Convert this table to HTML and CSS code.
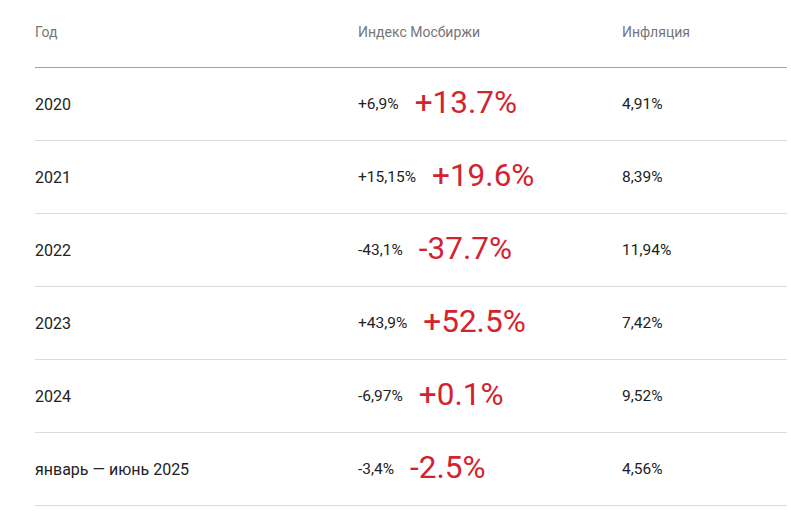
FILE: index.html
```html
<!DOCTYPE html>
<html lang="ru">
<head>
<meta charset="utf-8">
<title>Индекс Мосбиржи и инфляция</title>
<link rel="stylesheet" href="styles.css">
</head>
<body>
<div class="table">
  <div class="row head">
    <div class="cell">Год</div>
    <div class="cell">Индекс Мосбиржи</div>
    <div class="cell">Инфляция</div>
  </div>
  <div class="row">
    <div class="cell year">2020</div>
    <div class="cell"><span class="small">+6,9%</span><span class="big">+13.7%</span></div>
    <div class="cell">4,91%</div>
  </div>
  <div class="row">
    <div class="cell year">2021</div>
    <div class="cell"><span class="small">+15,15%</span><span class="big">+19.6%</span></div>
    <div class="cell">8,39%</div>
  </div>
  <div class="row">
    <div class="cell year">2022</div>
    <div class="cell"><span class="small">-43,1%</span><span class="big">-37.7%</span></div>
    <div class="cell">11,94%</div>
  </div>
  <div class="row">
    <div class="cell year">2023</div>
    <div class="cell"><span class="small">+43,9%</span><span class="big">+52.5%</span></div>
    <div class="cell">7,42%</div>
  </div>
  <div class="row">
    <div class="cell year">2024</div>
    <div class="cell"><span class="small">-6,97%</span><span class="big">+0.1%</span></div>
    <div class="cell">9,52%</div>
  </div>
  <div class="row">
    <div class="cell year">январь — июнь 2025</div>
    <div class="cell"><span class="small">-3,4%</span><span class="big">-2.5%</span></div>
    <div class="cell">4,56%</div>
  </div>
</div>
</body>
</html>
```

FILE: styles.css
```css
html, body {
  margin: 0;
  padding: 0;
  background: #fff;
}
body {
  font-family: Roboto, "Noto Sans", sans-serif;
  color: #222;
}
.table {
  margin-left: 35px;
  width: 752px;
}
.row {
  display: grid;
  grid-template-columns: 323px 264px 1fr;
  height: 72px;
  border-bottom: 1px solid #dcdcdc;
  font-size: 15.5px;
}
.row.head {
  height: 64px;
  padding-bottom: 3px;
  border-bottom: 1px solid #a3a3a3;
  color: #767676;
  font-size: 14px;
}
.cell {
  display: flex;
  align-items: center;
  white-space: nowrap;
}
.year {
  font-size: 16px;
}
.small {
  font-size: 15.5px;
}
.big {
  margin-left: 16px;
  font-size: 31.5px;
  color: #d2232f;
  position: relative;
  top: -2px;
}
```
